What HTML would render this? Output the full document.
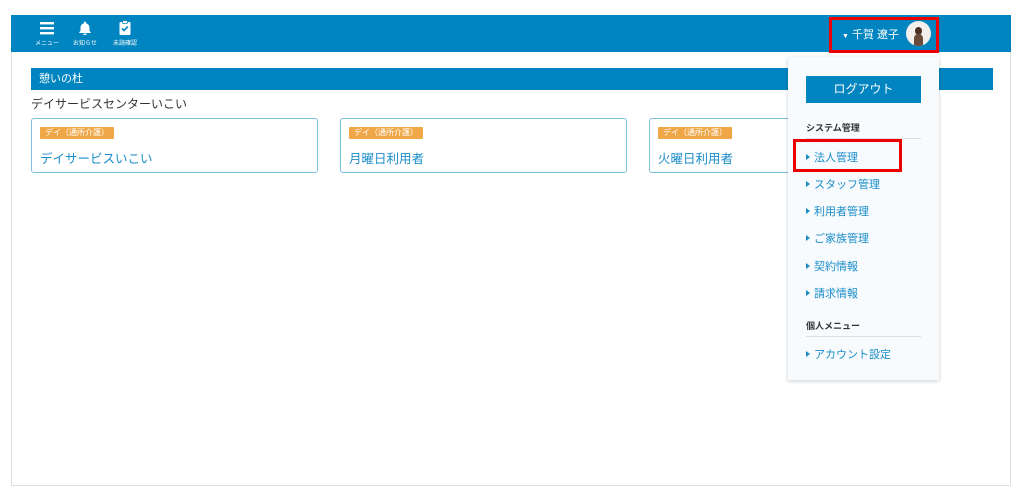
<!DOCTYPE html>
<html><head><meta charset="utf-8"><style>
*{margin:0;padding:0;box-sizing:border-box}
body{width:1024px;height:504px;background:#fff;font-family:"Liberation Sans","Noto Sans CJK JP",sans-serif;position:relative;overflow:hidden}
.frame{position:absolute;left:11px;top:15px;width:1000px;height:471px;border:1px solid #ddd;background:#fff}
.hdr{position:absolute;left:11px;top:15px;width:1000px;height:37px;background:#0085c0}
.ic{position:absolute;color:#fff;font-size:6px;text-align:center;top:0}
.bar{position:absolute;left:31px;top:68px;width:962px;height:22px;background:#0085c0;color:#fff;font-size:11px;line-height:22px;padding-left:8px}
.sub{position:absolute;left:31px;top:95px;font-size:12px;color:#333}
.card{position:absolute;top:118px;width:287px;height:55px;border:1px solid #7fbfe0;border-radius:3px;background:#fff}
.tag{position:absolute;left:8px;top:8px;background:#f0a748;color:#fff;font-size:8px;height:12px;line-height:12px;padding:0 5px;border-radius:1px}
.cn{position:absolute;left:8px;top:29px;font-size:12.5px;color:#1a8cc8}
.red{position:absolute;border:3px solid #e00}
.dd{position:absolute;left:788px;top:57px;width:151px;height:323px;background:#f7fbfd;box-shadow:0 1px 4px rgba(0,0,0,.2)}
.lo{position:absolute;left:18px;top:19px;width:115px;height:27px;background:#0085c0;color:#fff;font-size:12px;text-align:center;line-height:27px}
.sec{position:absolute;left:18px;width:115px;font-size:9px;font-weight:bold;color:#333;border-bottom:1px solid #ddd;padding-bottom:4px}
.it{position:absolute;left:18px;font-size:11px;color:#1a8cc8}
.it:before{content:"";display:inline-block;border-left:4px solid #1a8cc8;border-top:3px solid transparent;border-bottom:3px solid transparent;margin-right:4px;vertical-align:1px}
</style></head><body>
<div class="frame"></div>
<div class="hdr">
 <div class="ic" style="left:24px;width:24px"><svg width="14" height="13" viewBox="0 0 14 13" style="margin-top:7px"><rect y="0" width="14" height="2.4" fill="#fff"/><rect y="5" width="14" height="2.4" fill="#fff"/><rect y="10" width="14" height="2.4" fill="#fff"/></svg><div style="margin-top:1px">メニュー</div></div>
 <div class="ic" style="left:61px;width:26px"><svg width="12" height="14" viewBox="0 0 12 14" style="margin-top:6px"><path d="M6 0.5a1 1 0 0 1 1 1v.7c2.2.5 3.5 2.3 3.5 4.6v3l1.3 1.6v.6H.2v-.6l1.3-1.6v-3c0-2.3 1.3-4.1 3.5-4.6v-.7a1 1 0 0 1 1-1zM4.3 12.6h3.4a1.7 1.7 0 0 1-3.4 0z" fill="#fff"/></svg><div style="margin-top:1px">お知らせ</div></div>
 <div class="ic" style="left:99px;width:30px"><svg width="12" height="15" viewBox="0 0 12 15" style="margin-top:5px"><rect x="0.5" y="2" width="11" height="13" rx="1" fill="#fff"/><rect x="3.5" y="0.5" width="5" height="3" rx="1" fill="#fff" stroke="#0085c0" stroke-width=".8"/><path d="M3 8.5l2 2 4-4" stroke="#0085c0" stroke-width="1.6" fill="none"/></svg><div style="margin-top:1px">未読確認</div></div>
 <div style="position:absolute;left:831px;top:11px;color:#fff;font-size:11px"><span style="font-size:7px">▼</span> 千賀 遼子</div>
 <div style="position:absolute;left:895px;top:6px;width:25px;height:25px;border-radius:50%;overflow:hidden;background:#f2efec"><div style="position:absolute;left:9px;top:6px;width:7px;height:8px;border-radius:50%;background:#4a3020"></div><div style="position:absolute;left:8px;top:13px;width:9px;height:12px;border-radius:40% 40% 0 0;background:#6a4a38"></div></div>
</div>
<div class="red" style="left:829px;top:17px;width:110px;height:36px"></div>
<div class="bar">憩いの杜</div>
<div class="sub">デイサービスセンターいこい</div>
<div class="card" style="left:31px"><div class="tag">デイ（通所介護）</div><div class="cn">デイサービスいこい</div></div>
<div class="card" style="left:340px"><div class="tag">デイ（通所介護）</div><div class="cn">月曜日利用者</div></div>
<div class="card" style="left:649px"><div class="tag">デイ（通所介護）</div><div class="cn">火曜日利用者</div></div>
<div class="dd">
 <div class="lo">ログアウト</div>
 <div class="sec" style="top:64px">システム管理</div>
 <div class="it" style="top:92px">法人管理</div>
 <div class="it" style="top:119px">スタッフ管理</div>
 <div class="it" style="top:146px">利用者管理</div>
 <div class="it" style="top:173px">ご家族管理</div>
 <div class="it" style="top:201px">契約情報</div>
 <div class="it" style="top:228px">請求情報</div>
 <div class="sec" style="top:262px">個人メニュー</div>
 <div class="it" style="top:289px">アカウント設定</div>
</div>
<div class="red" style="left:793px;top:139px;width:109px;height:33px"></div>
</body></html>
